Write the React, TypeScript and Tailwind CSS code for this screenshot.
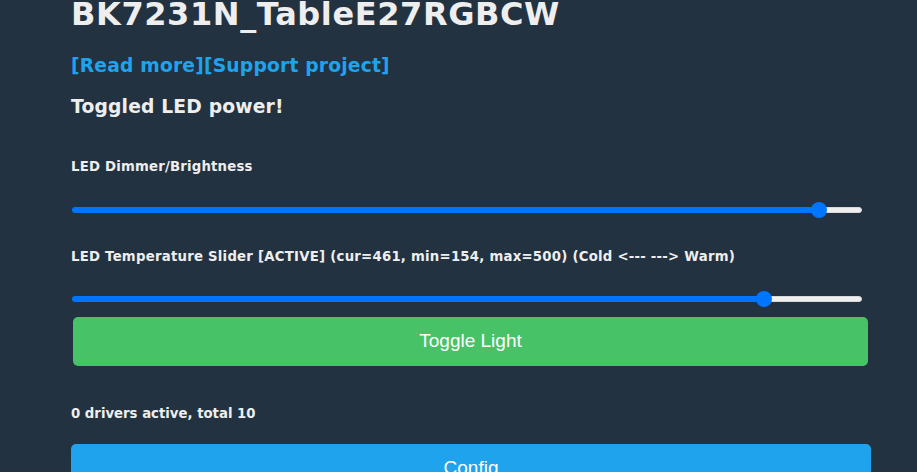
import React from "react";

function Slider({ fill }: { fill: number }) {
  return (
    <div className="ml-px flex h-4 w-[790px] items-center">
      <div className="h-[6px] rounded-l-full bg-[#0075ff]" style={{ width: fill }} />
      <div className="z-10 -mx-2 h-4 w-4 shrink-0 rounded-full bg-[#0075ff]" />
      <div className="h-[6px] flex-1 rounded-r-full border border-[#d8d8d8] bg-[#efefef]" />
    </div>
  );
}

export default function App() {
  return (
    <div
      className="h-[472px] w-[917px] overflow-hidden bg-[#223240] text-[#eeeeee]"
      style={{ fontFamily: '"DejaVu Sans", Verdana, sans-serif' }}
    >
      <div className="ml-[71px] w-[800px]">
        <h1 className="mt-[-6px] text-[32px] font-bold leading-[40px] tracking-[0.6px]">BK7231N_TableE27RGBCW</h1>
        <div className="mt-[20px] text-[18.72px] font-bold leading-[24px] tracking-[0.18px] text-[#1fa3ec]">
          <a href="#">[Read more]</a>
          <a href="#">[Support project]</a>
        </div>
        <h3 className="mt-[17px] text-[18.72px] font-bold leading-[24px] tracking-[0.17px]">Toggled LED power!</h3>
        <h5 className="mt-[40px] text-[13.28px] font-bold leading-[16px] tracking-[0.2px]">LED Dimmer/Brightness</h5>
        <div className="mt-[27px]">
          <Slider fill={747} />
        </div>
        <h5 className="mt-[31px] text-[13.28px] font-bold leading-[16px] tracking-[0.24px]">
          LED Temperature Slider [ACTIVE] (cur=461, min=154, max=500) (Cold &lt;--- ---&gt; Warm)
        </h5>
        <div className="mt-[26px]">
          <Slider fill={692} />
        </div>
        <div className="mt-[10px] pl-[2px] pr-[3px]">
          <button
            className="h-[49px] w-full rounded-[5px] bg-[#47c266] text-[19px] text-white"
            style={{ fontFamily: '"Liberation Sans", Arial, sans-serif' }}
          >
            Toggle Light
          </button>
        </div>
        <h5 className="mt-[40px] text-[13.28px] font-bold leading-[16px]">0 drivers active, total 10</h5>
        <button
          className="mt-[22px] h-[49px] w-full rounded-[5px] bg-[#1fa3ec] text-[19px] text-white"
          style={{ fontFamily: '"Liberation Sans", Arial, sans-serif' }}
        >
          Config
        </button>
      </div>
    </div>
  );
}
